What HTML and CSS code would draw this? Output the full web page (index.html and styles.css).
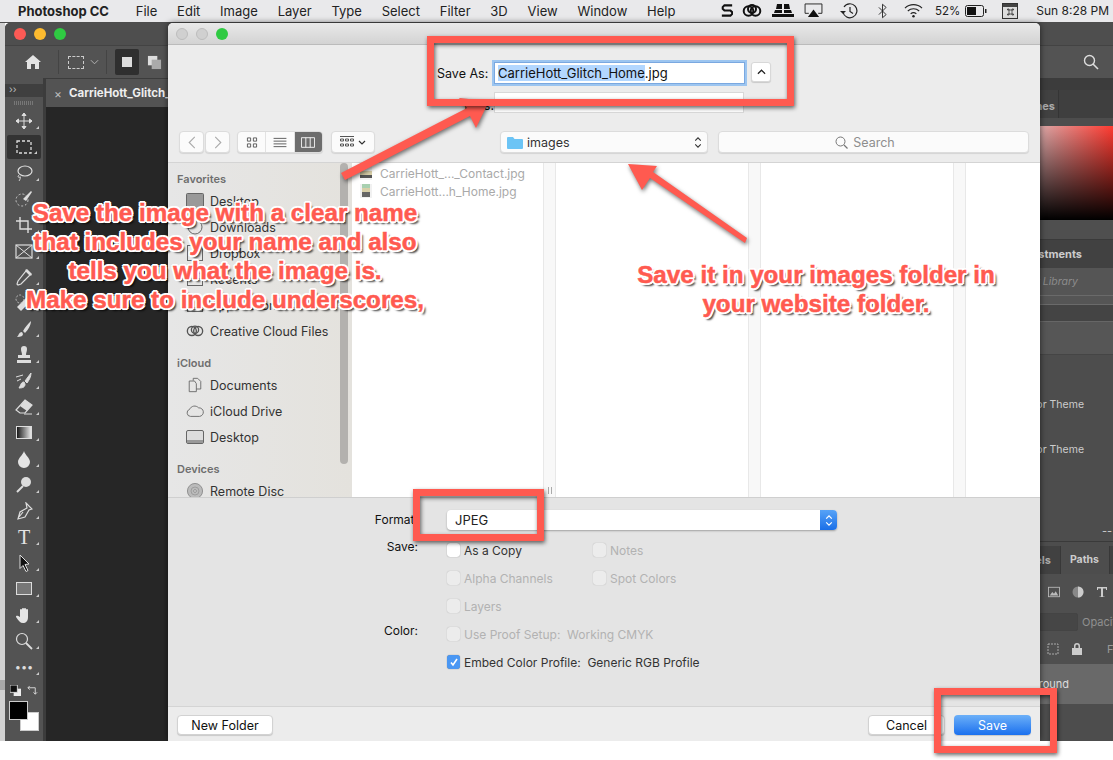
FILE: index.html
```html
<!DOCTYPE html>
<html lang="en">
<head>
  <meta charset="UTF-8">
  <title>Save As dialog in Photoshop</title>
  <link rel="stylesheet" href="styles.css">
</head>
<body>
  <header class="menubar">
    <nav class="menus">
      <span class="app-name">Photoshop CC</span>
      <span>File</span><span>Edit</span><span>Image</span><span>Layer</span><span>Type</span>
      <span>Select</span><span>Filter</span><span>3D</span><span>View</span><span>Window</span><span>Help</span>
    </nav>
    <div class="status">
      <svg class="st st-s" viewBox="0 0 14 16"><path d="M13 2H4L2 4v2l2 2h7l2 2v2l-2 2H1" fill="none" stroke="#111" stroke-width="2.4"/></svg>
      <svg class="st st-cc" viewBox="0 0 20 16"><circle cx="6.5" cy="8" r="4.8" fill="none" stroke="#111" stroke-width="2"/><circle cx="13.5" cy="8" r="4.8" fill="none" stroke="#111" stroke-width="2"/><circle cx="10" cy="6" r="4" fill="none" stroke="#111" stroke-width="2"/></svg>
      <svg class="st st-drive" viewBox="0 0 22 15"><path d="M5 1h5v5H4zM12 1h5l1 5h-6zM3 7h7v3H2zM12 7h7l1 3h-8zM0 11h22v3H0z" fill="#111"/></svg>
      <svg class="st st-air" viewBox="0 0 20 16"><path d="M5 11H1V1h18v10h-4" fill="none" stroke="#222" stroke-width="1"/><path d="M10 7l6 8H4z" fill="#111"/></svg>
      <svg class="st st-clock" viewBox="0 0 18 18"><path d="M4 5a7 7 0 1 1-1 5" fill="none" stroke="#222" stroke-width="1.2"/><path d="M0 9l3 3 3-3z" fill="#222"/><path d="M10 5v4.500l3 2" fill="none" stroke="#222" stroke-width="1.2"/></svg>
      <svg class="st st-bt" viewBox="0 0 10 16"><path d="M1 4l8 8-4 3.5V.5l4 3.5-8 8" fill="none" stroke="#222" stroke-width="1"/></svg>
      <svg class="st st-wifi" viewBox="0 0 20 15"><path d="M1 5a13 13 0 0 1 18 0M4 8a9 9 0 0 1 12 0M7 11a4.500 4.500 0 0 1 6 0" fill="none" stroke="#222" stroke-width="1.2"/><circle cx="10" cy="13.5" r="1.3" fill="#222"/></svg>
      <span class="battery-text">52%</span>
      <svg class="st st-batt" viewBox="0 0 22 12"><rect x=".5" y=".5" width="18" height="11" rx="2" fill="none" stroke="#222"/><rect x="2" y="2" width="9" height="8" fill="#111"/><rect x="20" y="4" width="1.5" height="4" fill="#222"/></svg>
      <svg class="st st-cmd" viewBox="0 0 16 16"><rect x=".5" y=".5" width="15" height="15" fill="#ddd" stroke="#333"/><rect x="1" y="1" width="14" height="3" fill="#444"/><path d="M7 7h3v4H7zM7 7H5.500V6H7zM10 7h1.500V6H10zM7 11H5.500v1H7zM10 11h1.500v1H10z" fill="none" stroke="#222" stroke-width=".7"/></svg>
      <span class="clock">Sun 8:28 PM</span>
    </div>
  </header>

  <section class="ps-window">
    <div class="ps-title">
      <i class="light red"></i><i class="light yellow"></i><i class="light green"></i>
    </div>
    <div class="ps-options">
      <svg class="opt-home" viewBox="0 0 18 16"><path d="M9 1l8 7h-2v7h-4v-5H7v5H3V8H1z" fill="#e4e4e4"/></svg>
      <span class="opt-sep"></span>
      <span class="opt-marquee"></span>
      <svg class="opt-chev" viewBox="0 0 10 6"><path d="M1 1l4 4 4-4" fill="none" stroke="#bbb"/></svg>
      <span class="opt-sep sep-b"></span>
      <span class="opt-mode"><i></i></span>
      <svg class="opt-add" viewBox="0 0 16 16"><rect x="1" y="1" width="10" height="10" fill="#ddd"/><rect x="5" y="5" width="10" height="10" fill="#aaa"/></svg>
      <svg class="opt-search" viewBox="0 0 16 16"><circle cx="6.5" cy="6.5" r="5" fill="none" stroke="#ddd" stroke-width="1.4"/><path d="M10 10l5 5" stroke="#ddd" stroke-width="1.6"/></svg>
    </div>
    <div class="ps-body">
      <aside class="toolbar">
        <div class="tool-head">&#8250;&#8250;</div>
        <div class="tool-grip"></div>
        <ul class="tools">
          <li><svg viewBox="0 0 18 18"><path d="M9 1v16M1 9h16M9 1L7 3.500h4zM9 17l-2-2.500h4zM1 9l2.500-2v4zM17 9l-2.500-2v4z" fill="#ddd" stroke="#ddd"/></svg></li>
          <li class="is-active"><svg viewBox="0 0 18 18"><rect x="2" y="3" width="14" height="12" fill="none" stroke="#ddd" stroke-width="1.3" stroke-dasharray="3 2"/></svg></li>
          <li><svg viewBox="0 0 18 18"><ellipse cx="10" cy="7" rx="7" ry="5" fill="none" stroke="#ddd" stroke-width="1.2"/><path d="M4 11c-2 2 0 3 1 2s0 3-1 4" fill="none" stroke="#ddd"/></svg></li>
          <li><svg viewBox="0 0 18 18"><circle cx="7" cy="10" r="6" fill="none" stroke="#ccc" stroke-dasharray="2 2"/><path d="M8 9l8-8 1 1-6 9z" fill="#ddd"/></svg></li>
          <li><svg viewBox="0 0 18 18"><path d="M1 5h12v12M5 1v12h12" fill="none" stroke="#ddd" stroke-width="1.4"/></svg></li>
          <li><svg viewBox="0 0 18 18"><rect x="1" y="3" width="16" height="13" fill="none" stroke="#ddd" stroke-width="1.2"/><path d="M1 3l16 13M17 3L1 16" stroke="#ddd"/></svg></li>
          <li><svg viewBox="0 0 18 18"><path d="M11 3l4 4-9 9-3 1-1-1 1-3z" fill="none" stroke="#ddd" stroke-width="1.2"/><path d="M10 2l2-1 5 5-1 2z" fill="#ddd"/></svg></li>
          <li><svg viewBox="0 0 18 18"><path d="M6 17L16 7l-4-4L2 13z" fill="#ddd"/><circle cx="5" cy="5" r="4" fill="none" stroke="#bbb" stroke-dasharray="2 1.500"/></svg></li>
          <li><svg viewBox="0 0 18 18"><path d="M16 1c-3 3-6 6-8 10l2 2c3-3 6-8 6-12zM7 12c-3 0-3 3-5 5 4 0 6-1 6-3z" fill="#ddd"/></svg></li>
          <li><svg viewBox="0 0 18 18"><path d="M6 3a3 3 0 0 1 6 0c0 3-1 3-1 6h4v3H3V9h4c0-3-1-3-1-6zM2 14h14v3H2z" fill="#ddd"/></svg></li>
          <li><svg viewBox="0 0 18 18"><path d="M16 1c-2 3-4 5-6 8l2 2c2-3 4-6 4-10zM9 10c-3 0-3 3-5 6 4 0 6-1 6-4zM1 5l7-2M2 9l4-2" fill="#ddd" stroke="#ddd"/></svg></li>
          <li><svg viewBox="0 0 18 18"><path d="M10 2l7 5-7 8H5l-4-3z" fill="none" stroke="#ddd" stroke-width="1.2"/><path d="M10 2l7 5-5 6-7-5z" fill="#ddd"/><path d="M9 16h8" stroke="#ddd"/></svg></li>
          <li><svg viewBox="0 0 18 18"><defs><linearGradient id="gr"><stop offset="0" stop-color="#111"/><stop offset="1" stop-color="#eee"/></linearGradient></defs><rect x="1.5" y="2.5" width="15" height="12" fill="url(#gr)" stroke="#ddd"/></svg></li>
          <li><svg viewBox="0 0 18 18"><path d="M9 1c1 4 6 7 6 11a6 6 0 0 1-12 0c0-4 5-7 6-11z" fill="#e4e4e4"/></svg></li>
          <li><svg viewBox="0 0 18 18"><circle cx="11" cy="6" r="5" fill="#ddd"/><path d="M8 10l-6 6" stroke="#ddd" stroke-width="2"/></svg></li>
          <li><svg viewBox="0 0 18 18"><path d="M11 1l6 6-3 1-4 7-7 2 2-7 7-4zM4 15l4-5" fill="none" stroke="#ddd" stroke-width="1.2"/></svg></li>
          <li><span class="tool-t">T</span></li>
          <li><svg viewBox="0 0 18 18"><path d="M5 1l9 9-4 .5 3 6-2 1-3-6-3 3z" fill="#111" stroke="#ddd"/></svg></li>
          <li><svg viewBox="0 0 18 18"><rect x="1.5" y="2.5" width="15" height="12" fill="#777" stroke="#ddd"/></svg></li>
          <li><svg viewBox="0 0 18 18"><path d="M5 8V4a1 1 0 0 1 2 0V3a1 1 0 0 1 2 0v0a1 1 0 0 1 2 0v1a1 1 0 0 1 2 0v7c0 4-2 6-5 6s-4-2-7-6c0-2 2-1 4 0z" fill="#e4e4e4"/></svg></li>
          <li><svg viewBox="0 0 18 18"><circle cx="7" cy="7" r="5.500" fill="none" stroke="#ddd" stroke-width="1.2"/><path d="M11 11l6 6" stroke="#ddd" stroke-width="1.8"/></svg></li>
          <li class="tool-dots">&#8226;&#8226;&#8226;</li>
        </ul>
        <div class="swatch-mini">
          <svg viewBox="0 0 12 12" class="mini-default"><rect x="4" y="4" width="8" height="8" fill="#eee"/><rect x="0" y="0" width="8" height="8" fill="#111" stroke="#ddd"/></svg>
          <svg viewBox="0 0 12 12" class="mini-swap"><path d="M1 3h8v7M1 3l2-2M1 3l2 2M9 10L7 8M9 10l2-2" fill="none" stroke="#ddd"/></svg>
        </div>
        <div class="swatches"><i class="fg"></i><i class="bg"></i></div>
      </aside>
      <main class="canvas-area">
        <div class="doc-tab"><span class="doc-x">&times;</span><span class="doc-name">CarrieHott_Glitch_Home.jpg</span></div>
        <div class="canvas"></div>
      </main>
      <aside class="panels">
        <div class="panel-top"></div>
        <div class="panel-tabs tabs-color"><span>Swatches</span></div>
        <div class="picker"></div>
        <div class="panel-gap"></div>
        <div class="panel-tabs tabs-adjust"><span>Adjustments</span></div>
        <div class="library"><span>Default Library</span></div>
        <div class="lib-bars"></div>
        <div class="lib-block"></div>
        <div class="theme"><span>Color Theme</span><span>Color Theme</span></div>
        <div class="panel-dash">--</div>
        <div class="panel-tabs tabs-layers"><span class="tab-channels">Channels</span><span class="tab-paths">Paths</span></div>
        <div class="layer-icons">
          <svg viewBox="0 0 14 12"><rect x=".5" y=".5" width="13" height="11" fill="none" stroke="#bbb"/><path d="M2 10l3-4 2 2 2-3 3 5z" fill="#bbb"/></svg>
          <svg viewBox="0 0 12 12"><circle cx="6" cy="6" r="5.500" fill="#888"/><path d="M6 .5a5.500 5.500 0 0 1 0 11z" fill="#ccc"/></svg>
          <svg viewBox="0 0 12 12"><path d="M1 1h10v3h-1V2.500H7v8h1.500v.5h-5v-.5H5v-8H2V4H1z" fill="#ccc"/></svg>
        </div>
        <div class="layer-blend"><span class="blend-select"></span><span class="blend-label">Opacity</span></div>
        <div class="layer-lock">
          <svg viewBox="0 0 14 14"><path d="M2 2h10v10H2z" fill="none" stroke="#aaa" stroke-dasharray="2 1"/></svg>
          <svg viewBox="0 0 12 14"><path d="M3 6V4a3 3 0 0 1 6 0v2h2v7H1V6zM4.500 6h3V4a1.500 1.500 0 0 0-3 0z" fill="#ccc"/></svg>
          <span>Fill</span>
        </div>
        <div class="layer-row"><span>Background</span></div>
      </aside>
    </div>
  </section>

  <section class="dialog">
    <div class="dlg-title">
      <i class="light dim"></i><i class="light dim"></i><i class="light green"></i>
    </div>
    <div class="dlg-head">
      <div class="save-row">
        <label class="save-label">Save As:</label>
        <div class="name-input"><span class="selected">CarrieHott_Glitch_Home</span>.jpg</div>
        <button class="mini-btn"><svg viewBox="0 0 10 6"><path d="M1 5l4-4 4 4" fill="none" stroke="#222" stroke-width="1.4"/></svg></button>
      </div>
      <div class="tags-row">
        <label class="tags-label">Tags:</label>
        <div class="tags-input"></div>
      </div>
      <div class="nav-row">
        <button class="mac-btn nav-btn"><svg viewBox="0 0 8 14"><path d="M7 1L1 7l6 6" fill="none" stroke="#aaa" stroke-width="1.2"/></svg></button>
        <button class="mac-btn nav-btn"><svg viewBox="0 0 8 14"><path d="M1 1l6 6-6 6" fill="none" stroke="#aaa" stroke-width="1.2"/></svg></button>
        <div class="view-seg mac-btn">
          <span><svg viewBox="0 0 12 12"><path d="M1 1h3.500v3.500H1zM7.500 1H11v3.500H7.500zM1 7.500h3.500V11H1zM7.500 7.500H11V11H7.500z" fill="none" stroke="#555"/></svg></span>
          <span><svg viewBox="0 0 14 12"><path d="M0 1.500h14M0 4.500h14M0 7.500h14M0 10.500h14" stroke="#555"/></svg></span>
          <span class="on"><svg viewBox="0 0 16 12"><path d="M.5.500h15v11H.5zM5.500.5v11M10.500.5v11" fill="none" stroke="#fff"/></svg></span>
        </div>
        <button class="mac-btn group-btn">
          <svg class="grp" viewBox="0 0 14 12"><path d="M0 .5h14" stroke="#555"/><path d="M.5 3h3v2h-3zM5.500 3h3v2h-3zM10.500 3h3v2h-3zM.5 8h3v2h-3zM5.500 8h3v2h-3zM10.500 8h3v2h-3z" fill="none" stroke="#555"/></svg>
          <svg class="grp-chev" viewBox="0 0 8 5"><path d="M1 1l3 3 3-3" fill="none" stroke="#333" stroke-width="1.2"/></svg>
        </button>
        <div class="mac-btn folder-pop">
          <svg class="folder" viewBox="0 0 16 13"><path d="M0 2a1 1 0 0 1 1-1h5l1.500 2H15a1 1 0 0 1 1 1v8a1 1 0 0 1-1 1H1a1 1 0 0 1-1-1z" fill="#6cc4f5"/></svg>
          <span>images</span>
          <svg class="updown" viewBox="0 0 8 14"><path d="M1 5l3-3 3 3M1 9l3 3 3-3" fill="none" stroke="#333" stroke-width="1.2"/></svg>
        </div>
        <div class="mac-btn search-box">
          <svg viewBox="0 0 13 13"><circle cx="5.500" cy="5.500" r="4.500" fill="none" stroke="#777"/><path d="M9 9l3.500 3.500" stroke="#777" stroke-width="1.2"/></svg>
          <span>Search</span>
        </div>
      </div>
    </div>

    <div class="browser">
      <aside class="sidebar">
        <h4>Favorites</h4>
        <div class="side-item"><svg viewBox="0 0 18 16"><rect x=".5" y=".5" width="17" height="15" rx="1" fill="#999" stroke="#666"/></svg>Desktop</div>
        <div class="side-item"><svg viewBox="0 0 18 16"><circle cx="9" cy="8" r="7" fill="none" stroke="#666"/></svg>Downloads</div>
        <div class="side-item"><svg viewBox="0 0 18 16"><rect x="1.5" y=".5" width="15" height="15" fill="none" stroke="#666"/></svg>Dropbox</div>
        <div class="side-item"><svg viewBox="0 0 18 16"><rect x="1.5" y="2.5" width="15" height="12" fill="none" stroke="#666"/></svg>Recents</div>
        <div class="side-item"><svg viewBox="0 0 18 16"><rect x="1.5" y="2.5" width="15" height="12" fill="none" stroke="#666"/></svg>Applications</div>
        <div class="side-item"><svg viewBox="0 0 20 14"><circle cx="6.5" cy="7" r="5" fill="none" stroke="#555" stroke-width="1.5"/><circle cx="13.5" cy="7" r="5" fill="none" stroke="#555" stroke-width="1.5"/><circle cx="10" cy="5.500" r="4" fill="none" stroke="#555" stroke-width="1.5"/></svg>Creative Cloud Files</div>
        <h4 class="gap">iCloud</h4>
        <div class="side-item"><svg viewBox="0 0 18 18"><path d="M2.500 4.500h6l2 3v9h-8zM7 4V1.500h5l3.500 3.500v8.500h-5" fill="none" stroke="#666"/></svg>Documents</div>
        <div class="side-item"><svg viewBox="0 0 20 14"><path d="M5 13a4 4 0 0 1-1-7.800A6 6 0 0 1 14 3.500a4.700 4.700 0 0 1 1 9.500z" fill="none" stroke="#666"/></svg>iCloud Drive</div>
        <div class="side-item"><svg viewBox="0 0 18 16"><rect x=".5" y="1.500" width="17" height="13" rx="1.5" fill="#ddd" stroke="#666"/><path d="M1 11h16v3H1z" fill="#999"/></svg>Desktop</div>
        <h4 class="gap">Devices</h4>
        <div class="side-item"><svg viewBox="0 0 18 18"><circle cx="9" cy="9" r="8.500" fill="#bbb" stroke="#888"/><circle cx="9" cy="9" r="4.500" fill="none" stroke="#999"/><circle cx="9" cy="9" r="1.5" fill="#eee" stroke="#888"/></svg>Remote Disc</div>
        <span class="side-scroll"></span>
      </aside>
      <div class="col col-files">
        <div class="file"><svg viewBox="0 0 12 14"><rect width="12" height="14" fill="#f1f1f1"/><rect y="5" width="12" height="4" fill="#d8cfa8"/><rect y="9" width="12" height="3" fill="#555"/></svg>CarrieHott_..._Contact.jpg</div>
        <div class="file"><svg viewBox="0 0 12 14"><rect width="12" height="14" fill="#f1f1f1"/><rect x="2" width="8" height="4" fill="#a8d0b0"/><rect x="2" y="4" width="8" height="4" fill="#d8cfa8"/><rect x="2" y="8" width="8" height="5" fill="#666"/></svg>CarrieHott...h_Home.jpg</div>
      </div>
      <div class="col-handle"><span class="grip"></span></div>
      <div class="col col-mid"></div>
      <div class="col-handle"></div>
      <div class="col col-mid"></div>
      <div class="col-handle"></div>
      <div class="col col-end"></div>
    </div>

    <div class="options">
      <div class="opt-row format-row">
        <span class="opt-label">Format:</span>
        <div class="format-pop">
          <span>JPEG</span>
          <i class="stepper"><svg viewBox="0 0 8 14"><path d="M1 5l3-3 3 3M1 9l3 3 3-3" fill="none" stroke="#fff" stroke-width="1.3"/></svg></i>
        </div>
      </div>
      <div class="opt-row">
        <span class="opt-label">Save:</span>
        <span class="check-cell"><i class="check"></i>As a Copy</span>
        <span class="check-cell off"><i class="check"></i>Notes</span>
      </div>
      <div class="opt-row">
        <span class="opt-label"></span>
        <span class="check-cell off"><i class="check"></i>Alpha Channels</span>
        <span class="check-cell off"><i class="check"></i>Spot Colors</span>
      </div>
      <div class="opt-row">
        <span class="opt-label"></span>
        <span class="check-cell off"><i class="check"></i>Layers</span>
      </div>
      <div class="opt-row">
        <span class="opt-label">Color:</span>
        <span class="check-cell off wide"><i class="check"></i>Use Proof Setup:&nbsp; Working CMYK</span>
      </div>
      <div class="opt-row">
        <span class="opt-label"></span>
        <span class="check-cell wide"><i class="check on"><svg viewBox="0 0 10 10"><path d="M2 5.500l2 2.500 4-6" fill="none" stroke="#fff" stroke-width="1.6"/></svg></i>Embed Color Profile:&nbsp; Generic RGB Profile</span>
      </div>
    </div>

    <div class="dlg-foot">
      <button class="foot-btn new-folder">New Folder</button>
      <button class="foot-btn cancel">Cancel</button>
      <button class="foot-btn save">Save</button>
    </div>
  </section>

  <svg class="arrows" viewBox="0 0 1113 760">
    <path d="M341 173L467 108 459 98 489 101 476 128 470 116 345 180z"/>
    <path d="M747 238L653 172 657 166 628 164 642 190 650 178 745 243z"/>
  </svg>
  <div class="callout box-name"></div>
  <div class="callout box-format"></div>
  <div class="callout box-save"></div>
  <p class="note note-name">Save the image with a clear name<br>that includes your name and also<br>tells you what the image is.<br>Make sure to include underscores,</p>
  <p class="note note-folder">Save it in your images folder in<br>your website folder.</p>
</body>
</html>
```

FILE: styles.css
```css
* {
  box-sizing: border-box;
}

html, body {
  margin: 0;
  padding: 0;
}

body {
  position: relative;
  width: 1113px;
  height: 760px;
  overflow: hidden;
  background: #fff;
  font-family: Inter, "Liberation Sans", sans-serif;
  font-size: 12px;
  color: #222;
}

body::before {
  content: "";
  position: absolute;
  left: 0;
  top: 22px;
  width: 5px;
  height: 719px;
  background: linear-gradient(to bottom, #d2d2d2 0 658px, #a8a8a8 658px 668px, #d2d2d2 668px);
}

button {
  font-family: inherit;
  padding: 0;
}

svg {
  display: block;
}

/* menu bar */
.menubar {
  position: relative;
  height: 23px;
  display: flex;
  justify-content: space-between;
  align-items: center;
  padding: 0 4px 1px 18px;
  background: #e9e9eb;
  border-bottom: 1px solid #4d4d4d;
  font-size: 13px;
  color: #222;
}

.menus {
  display: flex;
  gap: 19.8px;
}

.app-name {
  font-weight: 700;
  margin-right: 7px;
}

.status {
  display: flex;
  align-items: center;
}

.st { flex: none; }
.st-s { width: 12px; height: 15px; }
.st-cc { width: 20px; height: 16px; margin-left: 9px; }
.st-drive { width: 22px; height: 15px; margin-left: 10px; }
.st-air { width: 19px; height: 15px; margin-left: 10px; }
.st-clock { width: 18px; height: 18px; margin-left: 17px; }
.st-bt { width: 9px; height: 16px; margin-left: 20px; }
.st-wifi { width: 19px; height: 15px; margin-left: 17px; }
.battery-text { margin-left: 12px; font-size: 11.5px; }
.st-batt { width: 22px; height: 12px; margin-left: 5px; }
.st-cmd { width: 16px; height: 16px; margin-left: 15px; }
.clock { margin-left: 18px; font-size: 12px; white-space: nowrap; }

/* traffic lights */
.light {
  width: 12px;
  height: 12px;
  border-radius: 50%;
  display: block;
}

.red { background: #fc5a55; }
.yellow { background: #fdbb2f; }
.green { background: #2fca42; }
.dim { background: #d0d0d0; border: 1px solid #bcbcbc; }

/* photoshop window, behind the dialog */
.ps-window {
  position: absolute;
  left: 5px;
  top: 23px;
  width: 1108px;
  height: 718px;
  display: flex;
  flex-direction: column;
  background: #535353;
  border-radius: 5px 0 0 0;
  overflow: hidden;
}

.ps-title {
  height: 22px;
  display: flex;
  align-items: center;
  gap: 8px;
  padding-left: 9px;
  background: #4e4e4e;
}

.ps-options {
  height: 33px;
  display: flex;
  align-items: center;
  background: #535353;
  border-top: 1px solid #434343;
  position: relative;
}

.opt-home { width: 18px; height: 16px; margin-left: 19px; }
.opt-sep { width: 1px; height: 24px; background: #444; margin-left: 16px; }
.sep-b { margin-left: 7px; }
.opt-marquee { width: 16px; height: 13px; margin-left: 9px; border: 1px dashed #ccc; }
.opt-chev { width: 9px; height: 6px; margin-left: 6px; }

.opt-mode {
  width: 24px;
  height: 26px;
  margin-left: 8px;
  display: flex;
  align-items: center;
  justify-content: center;
  background: #2f2f2f;
  border-radius: 2px;
}

.opt-mode i {
  width: 10px;
  height: 10px;
  background: #ddd;
}

.opt-add { width: 15px; height: 15px; margin-left: 8px; }
.opt-search { width: 16px; height: 16px; margin-left: auto; margin-right: 14px; }

.ps-body {
  flex: 1;
  min-height: 0;
  display: flex;
  background: #3c3c3c;
}

.toolbar {
  width: 38px;
  margin-right: 3px;
  flex: none;
  background: #535353;
  display: flex;
  flex-direction: column;
  align-items: center;
}

.tool-head {
  width: 100%;
  height: 13px;
  padding-left: 4px;
  margin-top: 6px;
  line-height: 11px;
  font-size: 10px;
  color: #bbb;
  background: #3f3f3f;
}

.tool-grip {
  width: 20px;
  height: 4px;
  margin-top: 4px;
  background: repeating-linear-gradient(to right, #777 0 1px, transparent 1px 2px);
}

.tools {
  list-style: none;
  margin: 3px 0 0;
  padding: 0;
  width: 100%;
}

.tools li {
  position: relative;
  height: 26px;
  display: flex;
  align-items: center;
  justify-content: center;
  color: #ddd;
}

.tools li svg {
  width: 18px;
  height: 18px;
}

.tools li::after {
  content: "";
  position: absolute;
  right: 4px;
  bottom: 5px;
  border-style: solid;
  border-width: 0 0 3px 3px;
  border-color: transparent transparent #ccc transparent;
}

.tools .is-active {
  height: 24px;
  margin: 1px 2px;
  background: #333;
  border-radius: 2px;
}

.tool-t {
  font-family: "Liberation Serif", serif;
  font-size: 20px;
  color: #e4e4e4;
}

.tool-dots {
  font-size: 11px;
}

.swatch-mini {
  width: 100%;
  display: flex;
  justify-content: space-between;
  padding: 0 5px;
  margin-top: 5px;
}

.mini-default { width: 11px; height: 11px; }
.mini-swap { width: 11px; height: 11px; }

.swatches {
  position: relative;
  width: 30px;
  height: 30px;
  margin-top: 5px;
}

.swatches i {
  position: absolute;
  width: 19px;
  height: 19px;
  border: 1px solid #ccc;
}

.swatches .bg { right: 0; bottom: 0; background: #fff; }
.swatches .fg { left: 0; top: 0; background: #000; z-index: 1; }

.canvas-area {
  flex: 1;
  min-width: 0;
  display: flex;
  flex-direction: column;
}

.doc-tab {
  height: 29px;
  display: flex;
  align-items: center;
  gap: 7px;
  padding-left: 8px;
  background: #535353;
  border-top: 1px solid #3c3c3c;
  white-space: nowrap;
  overflow: hidden;
}

.doc-x {
  font-size: 12px;
  color: #bbb;
}

.doc-name {
  font-size: 11.5px;
  font-weight: 700;
  color: #eee;
}

.canvas {
  flex: 1;
  background: #262626;
}

.panels {
  width: 73px;
  flex: none;
  display: flex;
  flex-direction: column;
  background: #4d4d4d;
  overflow: hidden;
  white-space: nowrap;
}

.panel-top { height: 12px; background: #3c3c3c; }

.panel-tabs {
  height: 28px;
  display: flex;
  justify-content: flex-end;
  align-items: center;
  background: #414141;
  color: #ccc;
  font-size: 11px;
  font-weight: 700;
}

.tabs-color {
  padding: 3px 58px 0 0;
  color: #aaa;
  background: linear-gradient(to right, #414141 18px, #353535 18px 19px, #3f3f3f 19px);
}

.tabs-adjust { padding-right: 31px; }

.picker {
  height: 94px;
  margin-top: 8px;
  background:
    linear-gradient(to bottom, rgba(0, 0, 0, 0), #000),
    linear-gradient(to right, #d9a8a8, #ff3a30);
}

.panel-gap { height: 20px; background: #4f4f4f; border-bottom: 1px solid #3a3a3a; }

.library {
  height: 28px;
  display: flex;
  justify-content: flex-end;
  align-items: center;
  padding-right: 35px;
  background: #555;
  border-bottom: 1px solid #6a6a6a;
  font-style: italic;
  font-size: 10.5px;
  color: #8c8c8c;
}

.lib-bars {
  height: 26px;
  background: linear-gradient(to bottom, #555 0 8px, #6a6a6a 8px 9px, #444 9px 25px, #666 25px);
}

.lib-block { height: 33px; background: #565656; border-bottom: 1px solid #454545; }

.theme {
  height: 175px;
  display: flex;
  flex-direction: column;
  align-items: flex-end;
  padding: 42px 29px 0 0;
  gap: 30px;
  font-size: 10.5px;
  line-height: 15px;
  color: #ccc;
}

.panel-dash {
  height: 16px;
  margin-top: -4px;
  text-align: right;
  padding-right: 1px;
  font-size: 11px;
  color: #ccc;
  line-height: 10px;
  border-bottom: 1px solid #3a3a3a;
}

.tabs-layers { padding-right: 3px; margin-top: 4px; background: #414141; }
.tab-channels { margin-right: 9px; color: #aaa; }

.tab-paths {
  padding: 0 10px 0 9px;
  border-left: 1px solid #383838;
  border-right: 1px solid #383838;
  line-height: 28px;
  font-size: 10.5px;
  background: #4d4d4d;
}

.layer-icons {
  height: 36px;
  display: flex;
  align-items: center;
  gap: 12px;
  padding-left: 8px;
  background: #4f4f4f;
}

.layer-icons svg { width: 12px; height: 12px; }

.layer-blend {
  height: 24px;
  display: flex;
  align-items: center;
  gap: 4px;
  background: #4f4f4f;
}

.blend-select {
  width: 38px;
  height: 18px;
  flex: none;
  background: #464646;
  border-radius: 0 2px 2px 0;
  border: 1px solid #444;
}

.blend-label { font-size: 11px; color: #909090; }

.layer-lock {
  height: 30px;
  display: flex;
  align-items: center;
  gap: 10px;
  padding-left: 6px;
  background: #4f4f4f;
  font-size: 11px;
  color: #999;
}

.layer-lock svg { width: 14px; height: 14px; flex: none; }
.layer-lock span { margin-left: 13px; }

.layer-row {
  height: 40px;
  display: flex;
  justify-content: flex-end;
  align-items: center;
  padding-right: 44px;
  background: #696969;
  font-size: 11px;
  color: #ddd;
}

/* save dialog */
.dialog {
  position: absolute;
  left: 168px;
  top: 23px;
  width: 872px;
  height: 718px;
  display: flex;
  flex-direction: column;
  background: #ececec;
  border-radius: 5px 5px 0 0;
  overflow: hidden;
  box-shadow: 0 0 6px rgba(0, 0, 0, .6);
  clip-path: inset(-8px -8px 0 -8px);
}

.dlg-title {
  height: 22px;
  flex: none;
  display: flex;
  align-items: center;
  gap: 8px;
  padding-left: 8px;
  background: linear-gradient(to bottom, #e9e9e9, #d3d3d3);
  border-bottom: 1px solid #bbb;
}

.dlg-head {
  height: 118px;
  flex: none;
  padding-top: 17px;
  background: #ececec;
  border-bottom: 1px solid #d4d4d4;
}

.save-row {
  height: 22px;
  display: flex;
  align-items: center;
  padding-left: 269px;
}

.save-label {
  width: 55px;
  font-size: 12.5px;
  color: #111;
}

.name-input {
  width: 251px;
  height: 22px;
  margin-left: 2px;
  padding-left: 3px;
  background: #fff;
  border: 1px solid #7aa8e0;
  box-shadow: 0 0 0 2px #9cc5f0;
  font-size: 13px;
  line-height: 20px;
  color: #111;
}

.selected { background: #b3d7ff; }

.mini-btn {
  width: 20px;
  height: 20px;
  margin-left: 6px;
  margin-top: -2px;
  display: flex;
  align-items: center;
  justify-content: center;
  background: #fff;
  border: 1px solid #d8d8d8;
  border-radius: 3px;
  box-shadow: 0 1px 1px rgba(0, 0, 0, .15);
}

.mini-btn svg { width: 9px; height: 6px; }

.tags-row {
  height: 21px;
  margin-top: 8px;
  display: flex;
  padding-left: 291px;
}

.tags-label {
  width: 35px;
  text-align: right;
  align-self: flex-end;
  font-size: 12.5px;
  color: #111;
}

.tags-input {
  width: 250px;
  background: #fff;
  border: 1px solid #d8d8d8;
}

.nav-row {
  height: 22px;
  margin-top: 18px;
  display: flex;
  padding-left: 11px;
}

.mac-btn {
  height: 22px;
  background: #fbfbfb;
  border: 1px solid #dcdcdc;
  border-radius: 4px;
  box-shadow: 0 1px 1px rgba(0, 0, 0, .1);
}

.nav-btn {
  width: 25px;
  margin-right: 1px;
  display: flex;
  align-items: center;
  justify-content: center;
}

.nav-btn svg { width: 8px; height: 13px; }

.view-seg {
  width: 86px;
  margin-left: 6px;
  display: flex;
  overflow: hidden;
}

.view-seg span {
  flex: 1;
  display: flex;
  align-items: center;
  justify-content: center;
  border-right: 1px solid #e2e2e2;
}

.view-seg .on { background: #6d6d6d; border-right: none; }
.view-seg svg { width: 14px; height: 11px; }

.group-btn {
  width: 44px;
  margin-left: 8px;
  display: flex;
  align-items: center;
  justify-content: center;
  gap: 4px;
}

.grp { width: 14px; height: 12px; }
.grp-chev { width: 8px; height: 5px; }

.folder-pop {
  width: 208px;
  margin-left: 125px;
  display: flex;
  align-items: center;
  padding: 0 5px 0 6px;
  font-size: 12.5px;
  color: #333;
}

.folder { width: 16px; height: 13px; margin-right: 4px; }
.updown { width: 8px; height: 13px; margin-left: auto; }

.search-box {
  width: 311px;
  margin-left: 10px;
  padding-right: 17px;
  display: flex;
  align-items: center;
  justify-content: center;
  gap: 5px;
  font-size: 12.5px;
  color: #8e8e8e;
}

.search-box svg { width: 13px; height: 13px; }

.browser {
  height: 335px;
  flex: none;
  display: flex;
  background: #fff;
  border-bottom: 1px solid #cfcfcf;
}

.sidebar {
  position: relative;
  width: 184px;
  flex: none;
  padding: 9px 0 0 9px;
  overflow: hidden;
  background: linear-gradient(to right, #e6e6e6, #e4e2dd);
  font-size: 12.5px;
  color: #333;
}

.sidebar h4 {
  margin: 0;
  height: 14px;
  line-height: 14px;
  font-size: 11px;
  font-weight: 600;
  color: #6e6e6e;
}

.sidebar h4.gap { margin-top: 12px; }

.side-item {
  height: 26px;
  display: flex;
  align-items: center;
  gap: 6px;
  white-space: nowrap;
}

.side-item svg {
  width: 18px;
  height: 16px;
  flex: none;
  margin-left: 9px;
}

.sidebar > h4 + .side-item { margin-top: 2px; }

.side-scroll {
  position: absolute;
  left: 172px;
  top: 0;
  width: 8px;
  height: 301px;
  background: #b3b1ae;
  border-radius: 4px;
}

.col {
  flex: none;
}

.col-files {
  width: 191px;
  padding: 1px 0 0 8px;
  color: #a9a9a9;
  font-size: 12px;
}

.file {
  height: 18px;
  display: flex;
  align-items: center;
  gap: 8px;
}

.file svg { width: 12px; height: 14px; }

.col-mid { width: 192px; }
.col-end { flex: 1; }

.col-handle {
  position: relative;
  width: 13px;
  flex: none;
  background: #f8f8f8;
  border-left: 1px solid #e8e8e8;
  border-right: 1px solid #e8e8e8;
}

.grip {
  position: absolute;
  left: 4px;
  bottom: 3px;
  width: 4px;
  height: 7px;
  border-left: 1px solid #aaa;
  border-right: 1px solid #aaa;
}

.options {
  height: 209px;
  flex: none;
  padding-top: 12px;
  background: #e4e4e4;
  border-bottom: 1px solid #d4d4d4;
}

.opt-row {
  height: 28px;
  display: flex;
  align-items: center;
  font-size: 12px;
  color: #333;
}

.format-row {
  height: 26px;
  align-items: flex-start;
}

.opt-label {
  width: 279px;
  flex: none;
  align-self: flex-start;
  padding-right: 29px;
  text-align: right;
  line-height: 22px;
  color: #111;
}

.format-row .opt-label { line-height: 20px; }

.format-pop {
  width: 390px;
  height: 20px;
  display: flex;
  align-items: center;
  justify-content: space-between;
  padding-left: 8px;
  background: #fff;
  border-radius: 4px;
  box-shadow: 0 1px 2px rgba(0, 0, 0, .3);
  font-size: 13px;
  color: #222;
}

.stepper {
  width: 17px;
  height: 20px;
  display: flex;
  align-items: center;
  justify-content: center;
  background: linear-gradient(to bottom, #57a3f7, #1a6fe8);
  border-radius: 0 4px 4px 0;
}

.stepper svg { width: 8px; height: 13px; }

.check-cell {
  width: 146px;
  display: flex;
  align-items: center;
  gap: 4px;
  white-space: nowrap;
}

.check-cell.wide { width: auto; }
.check-cell.off { color: #b2b2b2; }

.check {
  width: 13px;
  height: 14px;
  flex: none;
  display: flex;
  align-items: center;
  justify-content: center;
  background: #fff;
  border-radius: 3px;
  box-shadow: 0 0 1px rgba(0, 0, 0, .5);
}

.off .check { background: #ececec; box-shadow: 0 0 1px rgba(0, 0, 0, .3); }
.check.on { background: #4a97f3; }
.check svg { width: 10px; height: 10px; }

.dlg-foot {
  flex: 1;
  display: flex;
  align-items: center;
  padding: 2px 9px 0;
  background: #ececec;
}

.foot-btn {
  height: 20px;
  background: #fff;
  border: 1px solid #d2d2d2;
  border-radius: 4px;
  box-shadow: 0 1px 1px rgba(0, 0, 0, .15);
  font-size: 12.5px;
  color: #111;
}

.new-folder { width: 96px; }
.cancel { width: 77px; margin-left: auto; }

.save {
  width: 77px;
  margin-left: 9px;
  border: none;
  background: linear-gradient(to bottom, #6cb0f8, #1b70ee);
  color: #fff;
}

/* red annotations drawn over the screenshot */
.arrows {
  position: absolute;
  left: 0;
  top: 0;
  width: 1113px;
  height: 760px;
  fill: #ff5a50;
  filter: drop-shadow(1px 2px 2px rgba(0, 0, 0, .55));
}

.callout {
  position: absolute;
  border: 7px solid #ff5a50;
  filter: drop-shadow(1px 2px 2px rgba(0, 0, 0, .6));
}

.box-name { left: 427px; top: 36px; width: 367px; height: 70px; }
.box-format { left: 413px; top: 489px; width: 131px; height: 52px; }
.box-save { left: 934px; top: 688px; width: 123px; height: 65px; }

.note {
  position: absolute;
  margin: 0;
  font-family: "Liberation Sans", Arial, sans-serif;
  font-size: 24.2px;
  font-weight: 700;
  line-height: 29px;
  text-align: center;
  white-space: nowrap;
  color: #ff5a50;
  -webkit-text-stroke: .5px #ff5a50;
  text-shadow:
    -2px -1px 0 #fff, 2px -1px 0 #fff, -2px 1px 0 #fff, 2px 1px 0 #fff,
    -1px -2px 0 #fff, 1px -2px 0 #fff, -1px 2px 0 #fff, 1px 2px 0 #fff,
    3px 3px 2px rgba(0, 0, 0, .75);
}

.note-name { left: 20px; top: 198px; width: 410px; }
.note-folder { left: 616px; top: 260px; width: 400px; }
```
